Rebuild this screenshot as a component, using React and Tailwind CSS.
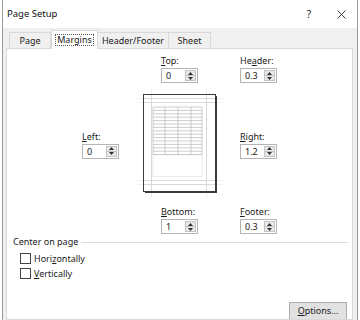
import React from "react";

const font = { fontFamily: '"Noto Sans", "Open Sans", sans-serif' };

function Spin({ value }) {
  return (
    <div className="flex h-[15px] w-[37px] border border-[#b4b4b4] bg-white">
      <div className="flex-1 pl-[4px] text-[9px] leading-[13px] text-[#1a1a1a]">{value}</div>
      <div className="my-[1px] mr-[1px] flex w-[11px] flex-col border border-[#c4c4c4] bg-[#e8e8e8]">
        <div className="flex flex-1 items-center justify-center border-b border-[#c4c4c4]">
          <svg width="5" height="3" viewBox="0 0 5 3"><path d="M0 3 L2.5 0 L5 3 Z" fill="#333" /></svg>
        </div>
        <div className="flex flex-1 items-center justify-center">
          <svg width="5" height="3" viewBox="0 0 5 3"><path d="M0 0 L2.5 3 L5 0 Z" fill="#333" /></svg>
        </div>
      </div>
    </div>
  );
}

function Field({ pre, u, post, value }) {
  return (
    <div className="flex flex-col gap-[2px]">
      <div className="text-[9px] leading-[11px] text-[#1a1a1a]">
        {pre}
        <span className="underline underline-offset-1">{u}</span>
        {post}
      </div>
      <Spin value={value} />
    </div>
  );
}

function Preview() {
  const rows = [];
  for (let i = 0; i <= 14; i++) {
    const y = 20 + i * 3.4;
    rows.push(<line key={i} x1="20" x2="69" y1={y} y2={y} stroke="#b8b8b8" strokeWidth="0.7" />);
  }
  const cols = [20, 32, 45, 58, 69].map((x, i) => (
    <line key={"c" + i} x1={x} x2={x} y1="20" y2="67.6" stroke="#b8b8b8" strokeWidth="0.7" />
  ));
  return (
    <svg width="94" height="114" viewBox="0 0 94 114">
      {[11.5, 15.5, 93.5, 97.5].map((y) => (
        <line key={"ho" + y} x1="4" x2="90" y1={y} y2={y} stroke="#ececec" strokeWidth="0.8" />
      ))}
      {[18.5, 73.5].map((x) => (
        <line key={"vo" + x} x1={x} x2={x} y1="2" y2="111" stroke="#ececec" strokeWidth="0.8" />
      ))}
      <rect x="10.5" y="7.5" width="72" height="97" fill="#fff" stroke="#3a3a3a" strokeWidth="1" />
      <line x1="83.5" x2="83.5" y1="9" y2="106" stroke="#3a3a3a" strokeWidth="1" />
      <line x1="12" x2="84" y1="105.5" y2="105.5" stroke="#3a3a3a" strokeWidth="1" />
      {[11.5, 15.5, 93.5, 97.5].map((y) => (
        <line key={"h" + y} x1="11" x2="82" y1={y} y2={y} stroke="#cfcfcf" strokeWidth="0.8" />
      ))}
      {[18.5, 73.5].map((x) => (
        <line key={"v" + x} x1={x} x2={x} y1="8" y2="104" stroke="#cfcfcf" strokeWidth="0.8" />
      ))}
      <rect x="20" y="67.6" width="49" height="22" fill="none" stroke="#e2e2e2" strokeWidth="0.7" />
      {rows}
      {cols}
    </svg>
  );
}

function Check({ pre, u, post }) {
  return (
    <div className="flex h-[15px] items-center">
      <div className="ml-[13px] h-[11px] w-[11px] border border-[#444] bg-white" />
      <div className="ml-[3px] text-[9px] leading-[11px] text-[#1a1a1a]">
        {pre}
        <span className="underline underline-offset-1">{u}</span>
        {post}
      </div>
    </div>
  );
}

export default function App() {
  return (
    <div className="h-[320px] w-[360px] overflow-hidden bg-white px-[2px]" style={font}>
      <div className="flex h-full flex-col border-x border-[#9a9a9a]">
        {/* title bar */}
        <div className="flex h-[28px] items-center bg-white">
          <div className="ml-[4px] text-[9.5px] text-[#111]">Page Setup</div>
          <div className="ml-auto mr-[26px] text-[10px] text-[#222]">?</div>
          <svg className="mr-[11px]" width="9" height="9" viewBox="0 0 9 9">
            <path d="M0.5 0.5 L8.5 8.5 M8.5 0.5 L0.5 8.5" stroke="#222" strokeWidth="0.9" />
          </svg>
        </div>
        {/* client */}
        <div className="flex flex-1 flex-col bg-[#f0f0f0]">
          <div className="mt-[2px] flex h-[18px] items-end pl-[6px]">
            <div className="flex h-[16px] w-[42px] items-center justify-center border border-b-0 border-[#d9d9d9] bg-[#f0f0f0] text-[9px] text-[#1a1a1a]">
              Page
            </div>
            <div className="relative z-10 -mb-px flex h-[19px] w-[47px] items-center justify-center border border-b-0 border-[#d9d9d9] bg-white">
              <span className="border border-dotted border-[#555] px-[1px] text-[9px] leading-[10px] text-[#1a1a1a]">
                Margins
              </span>
            </div>
            <div className="flex h-[16px] w-[71px] items-center justify-center border border-b-0 border-l-0 border-[#d9d9d9] bg-[#f0f0f0] text-[9px] text-[#1a1a1a]">
              Header/Footer
            </div>
            <div className="flex h-[16px] w-[42px] items-center justify-center border border-b-0 border-l-0 border-[#d9d9d9] bg-[#f0f0f0] text-[9px] text-[#1a1a1a]">
              Sheet
            </div>
          </div>
          {/* panel */}
          <div className="ml-[3px] mr-[4px] flex flex-1 flex-col border border-[#d9d9d9] bg-white">
            <div className="ml-[75px] mt-[6px] grid grid-cols-[37px_37px_37px] grid-rows-[auto_123px_auto] gap-x-[42px]">
              <div />
              <Field pre="" u="T" post="op:" value="0" />
              <Field pre="He" u="a" post="der:" value="0.3" />

              <div className="flex items-center">
                <Field pre="" u="L" post="eft:" value="0" />
              </div>
              <div className="relative flex items-center justify-center">
                <div className="absolute left-[-28px] top-[4px]">
                  <Preview />
                </div>
              </div>
              <div className="flex items-center">
                <Field pre="" u="R" post="ight:" value="1.2" />
              </div>

              <div />
              <Field pre="" u="B" post="ottom:" value="1" />
              <Field pre="" u="F" post="ooter:" value="0.3" />
            </div>

            <div className="mt-[2px] flex items-center pl-[6px] pr-[4px]">
              <div className="text-[9px] leading-[12px] text-[#1a1a1a]">Center on page</div>
              <div className="ml-[3px] flex-1 border-t border-[#dcdcdc]" />
            </div>
            <div className="mt-[3px]">
              <Check pre="Hori" u="z" post="ontally" />
              <Check pre="" u="V" post="ertically" />
            </div>
            <div className="mt-auto flex justify-end pr-[5px]">
              <div className="flex h-[17px] w-[58px] items-center justify-center border border-b-0 border-[#adadad] bg-[#e1e1e1] text-[9px] text-[#1a1a1a]">
                <span className="underline underline-offset-1">O</span>ptions...
              </div>
            </div>
          </div>
        </div>
      </div>
    </div>
  );
}
